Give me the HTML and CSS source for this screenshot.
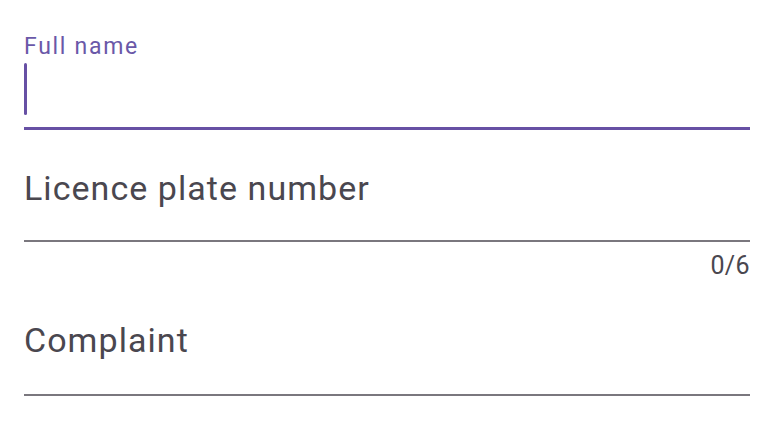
FILE: index.html
```html
<!DOCTYPE html>
<html lang="en">
<head>
<meta charset="utf-8">
<title>Form</title>
<link rel="stylesheet" href="styles.css">
</head>
<body>
<form class="form">
  <div class="field field--focused">
    <label class="field__label field__label--floating">Full name</label>
    <div class="field__input"><span class="cursor"></span></div>
    <div class="field__line field__line--active"></div>
  </div>
  <div class="field field--plate">
    <label class="field__label">Licence plate number</label>
    <div class="field__line"></div>
    <div class="field__counter">0/6</div>
  </div>
  <div class="field field--complaint">
    <label class="field__label">Complaint</label>
    <div class="field__line"></div>
  </div>
</form>
</body>
</html>
```
FILE: styles.css
```css
html, body {
  margin: 0;
  padding: 0;
  background: #ffffff;
}
body {
  width: 774px;
  height: 438px;
  overflow: hidden;
  font-family: Roboto, "Noto Sans", sans-serif;
}
.form {
  display: flex;
  flex-direction: column;
  padding: 0 24px;
}
.field {
  display: flex;
  flex-direction: column;
}
.field--focused {
  padding-top: 33px;
}
.field__label {
  color: #4a474f;
  font-size: 34px;
  line-height: 40px;
  letter-spacing: 1.05px;
}
.field__label--floating {
  color: #6a58a8;
  font-size: 23px;
  line-height: 27px;
  letter-spacing: 1.7px;
}
.field__input {
  margin-top: 3px;
  height: 52px;
  display: flex;
}
.cursor {
  width: 3px;
  height: 52px;
  border-radius: 2px;
  background: #6750a4;
}
.field__line {
  height: 2px;
  background: #7a777e;
}
.field__line--active {
  margin-top: 12px;
  height: 3px;
  background: #6750a4;
}
.field--plate {
  margin-top: 38px;
}
.field--plate .field__line {
  margin-top: 32px;
}
.field__counter {
  margin-top: 9px;
  align-self: flex-end;
  color: #4a474f;
  font-size: 25px;
  line-height: 30px;
  letter-spacing: 0.4px;
}
.field--complaint {
  margin-top: 39px;
}
.field--complaint .field__line {
  margin-top: 34px;
}
```
